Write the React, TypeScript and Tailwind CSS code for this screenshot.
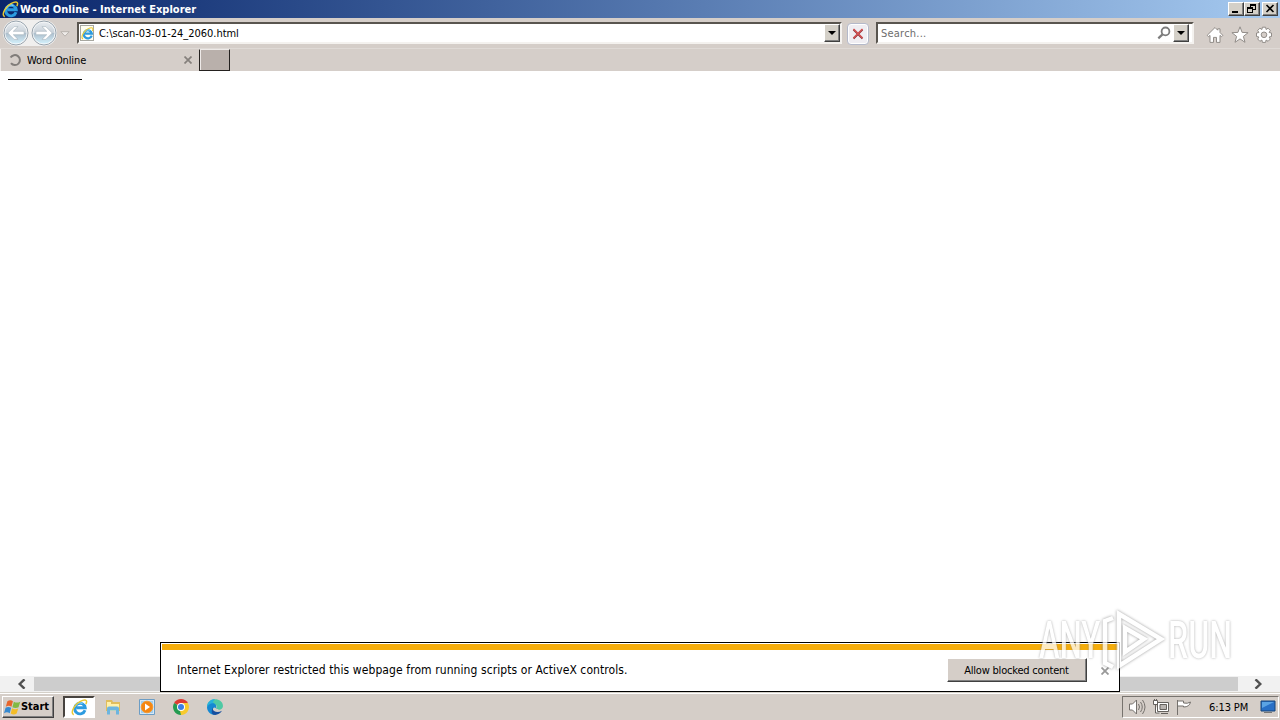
import React from 'react';

const raised = 'border border-t-white border-l-white border-r-[#404040] border-b-[#404040] shadow-[inset_-1px_-1px_0_#808080]';

const IeLogo = ({ className }: { className?: string }) => (
  <svg viewBox="0 0 16 16" className={className} fill="none">
    <path d="M13.2 10.6A5 5 0 1 1 13.4 8.2H5" stroke="#2c9be0" strokeWidth="2.7" />
    <path d="M4 7.2a4.6 4.6 0 0 1 6.8-3" stroke="#86d2fa" strokeWidth="1.2" />
    <path d="M2.6 14.8C-1.4 13.6 3.4 3.8 11 1.3c3.6-1.1 4.4.7 3 3.5" stroke="#e9c832" strokeWidth="1.4" />
  </svg>
);

const TitleBar = () => (
  <header className="flex h-[18px] items-center bg-gradient-to-r from-[#0a246a] to-[#a6caf0] pl-[2px] pr-[2px]">
    <IeLogo className="h-[17px] w-[17px] shrink-0" />
    <h1 className="ml-[1px] flex-1 whitespace-nowrap pt-px text-[11px] font-bold leading-[14px] tracking-[0.02px] text-white">Word Online - Internet Explorer</h1>
    <div className="flex">
      <button className={`flex h-[14px] w-4 bg-[#d4d0c8] ${raised}`}>
        <svg viewBox="0 0 14 12" className="h-3 w-[14px]"><path d="M3 8h6v2H3z" /></svg>
      </button>
      <button className={`flex h-[14px] w-4 bg-[#d4d0c8] ${raised}`}>
        <svg viewBox="0 0 14 12" className="h-3 w-[14px]" fill="none" stroke="#000" shapeRendering="crispEdges">
          <path d="M5 4V1.5h5.5v5H8M5 2.5h6M2.5 4.5h5v5h-5zM2 5.5h6" />
        </svg>
      </button>
      <button className={`ml-0.5 flex h-[14px] w-4 bg-[#d4d0c8] ${raised}`}>
        <svg viewBox="0 0 14 12" className="h-3 w-[14px]"><path d="m3.5 2 7 7m0-7-7 7" stroke="#000" strokeWidth="1.6" /></svg>
      </button>
    </div>
  </header>
);

const NavButton = ({ forward }: { forward?: boolean }) => (
  <svg viewBox="0 0 26 26" className={forward ? 'h-[26px] w-[26px] -scale-x-100' : 'h-[26px] w-[26px]'}>
    <defs>
      <linearGradient id="navFill" x2="0" y2="1">
        <stop stopColor="#e6eaee" />
        <stop offset=".48" stopColor="#c9d2da" />
        <stop offset=".52" stopColor="#aebfcd" />
        <stop offset="1" stopColor="#d3f0fb" />
      </linearGradient>
    </defs>
    <circle cx="13" cy="13" r="12" fill="#f6f8f9" stroke="#98a4ae" />
    <circle cx="13" cy="13" r="10.6" fill="url(#navFill)" />
    <path d="m4.8 13 6.4-6.4h3.9l-4.8 4.7h10.8v3.4H10.3l4.8 4.7h-3.9z" fill="#fff" stroke="#a5b1bc" strokeWidth=".6" />
  </svg>
);

const DropButton = () => (
  <button className={`flex h-[18px] w-4 items-center justify-center bg-[#d4d0c8] ${raised}`}>
    <svg viewBox="0 0 8 4" className="h-1 w-2"><path d="M0 0h8L4 4z" /></svg>
  </button>
);

const field = 'flex h-[22px] items-center border-2 border-t-[#59554f] border-l-[#59554f] border-r-[#f4f2ef] border-b-[#f4f2ef] bg-white';

const NavigationBar = () => (
  <div className="flex h-[30px] items-center pl-[3px]">
    <div className="flex gap-[2px] rounded-full bg-[#f0efee]">
      <NavButton />
      <NavButton forward />
    </div>
    <svg viewBox="0 0 10 6" className="ml-[3px] mt-px h-1.5 w-[10px]"><path d="M.8.7h8.4L5 5.2z" fill="#eeebe8" stroke="#b8b3ae" /></svg>
    <div className={`ml-[7px] w-[765px] ${field}`}>
      <span className="ml-px flex h-4 w-[14px] items-center justify-center border border-[#a7a7a0] bg-[#fffef0]">
        <IeLogo className="h-[13px] w-[13px] shrink-0" />
      </span>
      <span className="ml-[5px] flex-1 pt-[2px] text-[11px] tracking-[-0.04px]">C:\scan-03-01-24_2060.html</span>
      <DropButton />
    </div>
    <button className="ml-[5px] mt-px flex h-[22px] w-[22px] items-center justify-center rounded-sm border border-[#b4b9ca] bg-[#efedf2] shadow-[inset_0_0_0_1px_#fff]">
      <svg viewBox="0 0 12 12" className="h-3 w-3" fill="none">
        <path d="m1.5 1.5 9 9m0-9-9 9" stroke="#8f3037" strokeWidth="1.9" />
        <path d="m1.5 1 9 9m0-9-9 9" stroke="#d85758" strokeWidth="1.2" />
      </svg>
    </button>
    <div className={`ml-[7px] w-[318px] ${field}`}>
      <span className="ml-[3px] flex-1 pt-[2px] text-[11px] tracking-[0.22px] text-[#6d6d6d]">Search...</span>
      <svg viewBox="0 0 14 14" className="mr-[2px] h-[14px] w-[14px]" fill="none" stroke="#7c7c7c">
        <circle cx="8.5" cy="5.4" r="3.9" strokeWidth="1.8" />
        <path d="m5.5 8.4-4.2 4" strokeWidth="2.2" />
      </svg>
      <DropButton />
      <span className="w-[3px]" />
    </div>
    <div className="ml-[12px] mt-[4px] flex gap-[6.5px]">
      <svg viewBox="0 0 18 18" className="h-[18px] w-[18px]"><path d="M9 1.5 1.2 9.3l1.3 1.4L4 9.4v7h3.5v-5h3v5H14v-7l1.5 1.3 1.3-1.4L14 6.5V2.8h-2.3v1.4z" fill="#fff" stroke="#918c88" /></svg>
      <svg viewBox="0 0 18 18" className="h-[18px] w-[18px]"><path d="m9 .8 2.1 5.6 6 .3-4.7 3.7 1.6 5.9-5-3.4-5 3.4 1.6-5.9L.9 6.7l6-.3z" fill="#fff" stroke="#918c88" /></svg>
      <svg viewBox="0 0 18 18" className="h-[18px] w-[18px]">
        <path d="M7.4 1.2h3.2l.5 2.3 2-1.3 2.2 2.3-1.2 2 2.4.5v3.5l-2.4.5 1.2 2-2.2 2.3-2-1.3-.5 2.4H7.4L6.9 14l-2 1.3L2.7 13l1.2-2-2.4-.5V7l2.4-.5-1.2-2 2.2-2.3 2 1.3z" fill="#fff" stroke="#918c88" />
        <circle cx="9" cy="8.8" r="2.8" fill="#d5cec9" stroke="#918c88" />
      </svg>
    </div>
  </div>
);

const TabStrip = () => (
  <div className="flex h-[23px] border-t border-[#dfdad6]">
    <div className="flex w-[199px] items-center border-l border-[#f1eeeb] pl-[7px] pr-[7px]">
      <svg viewBox="0 0 14 14" className="h-[14px] w-[14px]"><path d="M2.6 4.6A5 5 0 1 1 3 10.2" fill="none" stroke="#817d7a" strokeWidth="2" /></svg>
      <span className="ml-[5px] flex-1 pt-[2px] text-[11px] tracking-[-0.12px]">Word Online</span>
      <svg viewBox="0 0 8 8" className="h-2 w-2"><path d="m.5.5 7 7m0-7-7 7" stroke="#85807c" strokeWidth="1.7" /></svg>
    </div>
    <div className="h-[22px] w-[31px] border border-[#24211f] border-t-[#eeeae8] bg-[#b9b0ab] shadow-[inset_1px_0_0_#eeeae8]" />
  </div>
);

const ScrollBar = () => (
  <div className="flex h-4 items-center bg-[#f1f1f1] px-[17px]">
    <svg viewBox="0 0 10 10" className="h-[10px] w-[10px]"><path d="M7.5.3 2.7 5l4.8 4.7" fill="none" stroke="#505050" strokeWidth="2.4" /></svg>
    <div className="ml-[7px] mr-[15px] h-[14px] flex-1 bg-[#cdcdcd]" />
    <svg viewBox="0 0 10 10" className="h-[10px] w-[10px]"><path d="M2.5.3 7.3 5 2.5 9.7" fill="none" stroke="#505050" strokeWidth="2.4" /></svg>
  </div>
);

const Notification = () => (
  <div className="absolute left-[160px] top-[642px] flex h-[50px] w-[960px] flex-col border border-black bg-white p-px">
    <div className="h-[6px] shrink-0 bg-[#f5ad0b]" />
    <div className="flex flex-1 items-center pl-[15px] pr-[9px]">
      <p className="flex-1 whitespace-nowrap text-[12px] tracking-[0.085px]">Internet Explorer restricted this webpage from running scripts or ActiveX controls.</p>
      <button className={`flex h-6 w-[140px] items-center justify-center bg-[#d5cec8] pr-px pt-[2px] text-[11px] tracking-[-0.2px] ${raised}`}>Allow blocked content</button>
      <svg viewBox="0 0 8 8" className="ml-[14px] mt-[2px] h-2 w-2"><path d="m.5.5 7 7m0-7-7 7" stroke="#999" strokeWidth="1.8" /></svg>
    </div>
  </div>
);

const Watermark = () => (
  <div className="absolute left-[1039px] top-[607px] flex h-[68px] items-center font-['Roboto',sans-serif] text-[51px] font-medium leading-[36px] text-white opacity-75 [text-shadow:0_0_3px_#888]">
    <span className="w-[61px] origin-left scale-x-[.61] whitespace-nowrap">ANY</span>
    <svg viewBox="0 0 66 68" className="h-[68px] w-[66px] overflow-visible" fill="none" stroke="#fff" strokeWidth="4.5">
      <g className="drop-shadow-[0_0_1.5px_#777]">
        <path d="m19 7 42 25-42 27zM25 21l19 11-19 13z" />
        <path d="m13 11-8 3v42l8 4" />
      </g>
    </svg>
    <span className="ml-[2px] w-[66px] origin-left scale-x-[.63] whitespace-nowrap">RUN</span>
  </div>
);

const WindowsFlag = () => (
  <svg viewBox="0 0 16 16" className="h-[17px] w-[17px]">
    <path d="M3.2 2.1Q6 .5 8.4 2L7 7.2q-2.7-1.6-5.3.1z" fill="#e7652b" />
    <path d="M9.3 2.5q2.7 1.6 6 0L13.7 7.7q-2.7 1.5-5.8 0z" fill="#82b944" />
    <path d="M1.5 8.3q2.6-1.7 5.2 0L5.4 13.3Q2.8 11.7 0 13.3z" fill="#3589d0" />
    <path d="M7.6 8.8q2.7 1.6 5.8.1l-1.5 4.8q-2.7 1.6-5.6 0z" fill="#f4bd27" />
  </svg>
);

const Folder = () => (
  <svg viewBox="0 0 18 18" className="h-[18px] w-[18px]">
    <path d="M2 2h6l1 2h7v9H2z" fill="#e0bd5c" />
    <path d="M3 4h4v2h8v7H3z" fill="#fff0a9" />
    <path d="M3 16.5v-6q0-2 2-2h8q2 0 2 2v6h-3v-4H6v4z" fill="#6db5df" />
  </svg>
);

const MediaPlayer = () => (
  <svg viewBox="0 0 18 18" className="h-[18px] w-[18px]">
    <path d="M1.5 1.5h15v15h-15z" fill="#d5e8f7" stroke="#6c9dc5" />
    <path d="M3 3h12v12H3z" fill="#a4cdea" />
    <circle cx="9" cy="9" r="5.8" fill="#f58611" stroke="#f59a32" />
    <path d="m7 5.5 5 3.5-5 3.5z" fill="#fff" />
  </svg>
);

const Chrome = () => (
  <svg viewBox="0 0 18 18" className="h-[18px] w-[18px]">
    <path d="M9 9 2.1 5a8 8 0 0 1 13.8 0z" fill="#dc3b32" />
    <path d="m9 9 6.9-4A8 8 0 0 1 9 17z" fill="#f8ca2c" />
    <path d="M9 9v8A8 8 0 0 1 2.1 5z" fill="#249b51" />
    <path d="M9 5h6.9L12.4 11 9 17l-1-4z" fill="#f8ca2c" />
    <circle cx="9" cy="9" r="4" fill="#fff" />
    <circle cx="9" cy="9" r="3" fill="#3b7fe5" />
  </svg>
);

const Edge = () => (
  <svg viewBox="0 0 18 18" className="h-[18px] w-[18px]">
    <path d="M1 9C1.2-1.3 16.8-1 17 8c.1 4.2-5.2 4.5-6.8 2.5 3-3.5-4-6.7-9.2-1.5" fill="#4fc9a4" />
    <path d="M1 9C1 4 5 1 9 1c-2 3-3 3 0 5-3-1-6 0-8 3" fill="#27b1dc" />
    <path d="M1 9c3.3-5.7 10.5-4.3 9.2 1.5C7.6 7.7 5 11.5 9 17c-5 0-8-4-8-8" fill="#1688d2" />
    <path d="M7.2 8.6c-2.5 4.6 4 7.2 8.8 4.2-3 5.4-12 5.8-10-.8.2-1.4.6-2.6 1.2-3.4" fill="#174f9f" />
  </svg>
);

const launchers = [
  { name: 'Explorer', Icon: Folder },
  { name: 'Media Player', Icon: MediaPlayer },
  { name: 'Chrome', Icon: Chrome },
  { name: 'Edge', Icon: Edge },
];

const TaskBar = () => (
  <footer className="flex h-7 items-start border-t border-[#d4d0c8] bg-[#d5cec8] pl-[2px] pt-[3px] shadow-[inset_0_1px_0_#fff]">
    <button className={`flex h-[22px] w-[52px] items-center pl-px ${raised}`}>
      <WindowsFlag />
      <span className="pt-px text-[11px] font-bold tracking-[-0.05px]">Start</span>
    </button>
    <button className="ml-[9px] flex h-[22px] w-8 items-center justify-center border-2 border-t-[#47433f] border-l-[#47433f] border-r-white border-b-white bg-white">
      <IeLogo className="h-[17px] w-[17px]" />
    </button>
    <div className="ml-[9px] mt-[2px] flex gap-4">
      {launchers.map(({ name, Icon }) => (
        <button key={name} aria-label={name}><Icon /></button>
      ))}
    </div>
    <div className="ml-auto mr-px flex h-[22px] w-[157px] items-center border border-t-[#77736e] border-l-[#77736e] border-r-white border-b-white pl-[5px]">
      <svg viewBox="0 0 18 18" className="h-[18px] w-[18px]" fill="#fff" stroke="#75716d">
        <path d="M1.5 6h3l4-4v14l-4-4h-3z" />
        <path d="M10.5 6q2 3 0 6m2-8q3.5 5 0 10m2-12q5 7 0 14" fill="none" />
      </svg>
      <svg viewBox="0 0 18 18" className="ml-[6px] h-[18px] w-[18px]" fill="#fff" stroke="#65615d">
        <path d="M5.5 4.5h11v9h-11zM9 15.5h7M3.5 7v8h4M1.5 2.5h4v4h-4zM2.5 1v2m2-2v2" />
        <path d="M8 6.5h6.5v5H8z" fill="#b9b4b0" />
      </svg>
      <svg viewBox="0 0 18 18" className="ml-[5px] h-[18px] w-[18px]" fill="#fff" stroke="#75716d">
        <path d="M2.5 2v15m0-14h6v2q4 1 7-1-1 5-7 5v-1h-6" />
      </svg>
      <span className="ml-[16px] whitespace-nowrap pt-[2px] text-[11px] tracking-[-0.1px]">6:13 PM</span>
      <svg viewBox="0 0 16 14" className="ml-auto mr-[2px] h-[14px] w-4">
        <path d="M1 1h14v10H1z" fill="#286fc6" stroke="#174578" />
        <path d="M2 2h12L2 8z" fill="#5ba3e4" />
        <path d="M4 12.5h8" stroke="#777" />
      </svg>
    </div>
  </footer>
);

export default function App() {
  return (
    <div className="relative flex h-[720px] w-[1280px] flex-col overflow-hidden bg-[#d5cec9] font-['DejaVu_Sans_Condensed','DejaVu_Sans',sans-serif] text-black">
      <TitleBar />
      <NavigationBar />
      <TabStrip />
      <main className="flex-1 bg-white pl-2 pt-2">
        <div className="h-px w-[74px] bg-black" />
      </main>
      <ScrollBar />
      <TaskBar />
      <Notification />
      <Watermark />
    </div>
  );
}
